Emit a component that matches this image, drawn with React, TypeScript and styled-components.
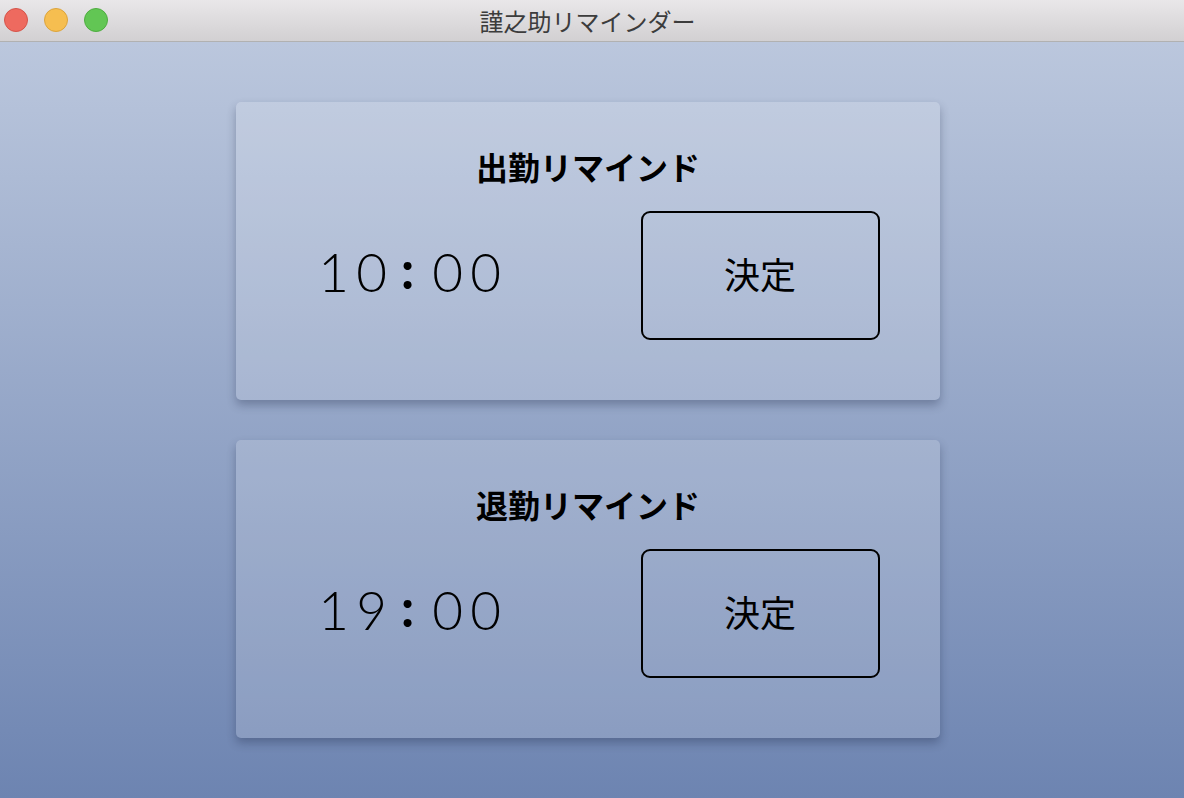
import React from "react";
import styled, { createGlobalStyle } from "styled-components";

const Global = createGlobalStyle`
  html, body { margin: 0; padding: 0; height: 100%; }
  body { font-family: "Noto Sans CJK JP", "Noto Sans", sans-serif; overflow: hidden; }
  #root { height: 100%; }
`;

const Window = styled.div`
  display: flex;
  flex-direction: column;
  height: 798px;
  width: 1184px;
`;

const TitleBar = styled.div`
  height: 41px;
  flex: none;
  display: flex;
  align-items: center;
  position: relative;
  background: linear-gradient(#e9e7e9, #d2d0d2);
  border-bottom: 1px solid #b1b1b1;
`;

const Lights = styled.div`
  display: flex;
  gap: 16px;
  padding-left: 4px;
  position: absolute;
  left: 0;
  top: 8px;
`;

const Light = styled.span<{ $c: string; $b: string }>`
  width: 24px;
  height: 24px;
  box-sizing: border-box;
  border-radius: 50%;
  background: ${(p) => p.$c};
  border: 1px solid ${(p) => p.$b};
`;

const WindowTitle = styled.div`
  flex: 1;
  text-align: center;
  font-family: "Noto Sans CJK JP", sans-serif;
  font-size: 24px;
  color: #3c3c3c;
  padding-right: 9px;
  line-height: 41px;
`;

const Content = styled.main`
  flex: 1;
  background: linear-gradient(#bbc7dd, #6d84b1);
  display: flex;
  flex-direction: column;
  align-items: center;
  padding-top: 60px;
  padding-right: 8px;
  gap: 40px;
`;

const Card = styled.section`
  width: 704px;
  height: 298px;
  box-sizing: border-box;
  background: rgba(255, 255, 255, 0.17);
  border-radius: 5px;
  box-shadow: 0 5px 10px rgba(20, 30, 60, 0.3);
  display: flex;
  flex-direction: column;
  align-items: center;
  padding-top: 44px;
`;

const CardTitle = styled.h2`
  margin: 0;
  font-family: "Noto Sans CJK JP", sans-serif;
  font-weight: 700;
  font-size: 32px;
  line-height: 40px;
  color: #000;
`;

const Row = styled.div`
  width: 100%;
  display: grid;
  grid-template-columns: 1fr 1fr;
  align-items: center;
  margin-top: 25px;
`;

const Time = styled.div`
  justify-self: center;
  display: grid;
  grid-template-columns: repeat(5, 38px);
  font-family: Lato, "Liberation Sans", sans-serif;
  font-weight: 300;
  font-size: 53px;
  line-height: 60px;
  color: #000;
  margin-top: -7px;
  margin-right: 5px;
`;

const Cell = styled.span<{ $colon?: boolean }>`
  text-align: center;
  font-weight: ${(p) => (p.$colon ? 700 : 300)};
  transform: ${(p) => (p.$colon ? "translate(-2px, -3px)" : "none")};
`;

const Button = styled.button`
  justify-self: center;
  margin-right: 8px;
  width: 239px;
  height: 129px;
  box-sizing: border-box;
  border: 2px solid #000;
  border-radius: 9px;
  background: transparent;
  font-family: "Noto Sans CJK JP", sans-serif;
  font-size: 36px;
  color: #000;
  padding: 0 0 5px;
  cursor: pointer;
`;

const reminders = [
  { title: "出勤リマインド", time: "10:00" },
  { title: "退勤リマインド", time: "19:00" },
];

export default function App() {
  return (
    <Window>
      <Global />
      <TitleBar>
        <Lights>
          <Light $c="#ee6a5f" $b="#d5544a" />
          <Light $c="#f6be50" $b="#dca43c" />
          <Light $c="#62c654" $b="#4ead40" />
        </Lights>
        <WindowTitle>謹之助リマインダー</WindowTitle>
      </TitleBar>
      <Content>
        {reminders.map((r) => (
          <Card key={r.title}>
            <CardTitle>{r.title}</CardTitle>
            <Row>
              <Time>
                {r.time.split("").map((ch, i) => (
                  <Cell key={i} $colon={ch === ":"}>
                    {ch}
                  </Cell>
                ))}
              </Time>
              <Button>決定</Button>
            </Row>
          </Card>
        ))}
      </Content>
    </Window>
  );
}
